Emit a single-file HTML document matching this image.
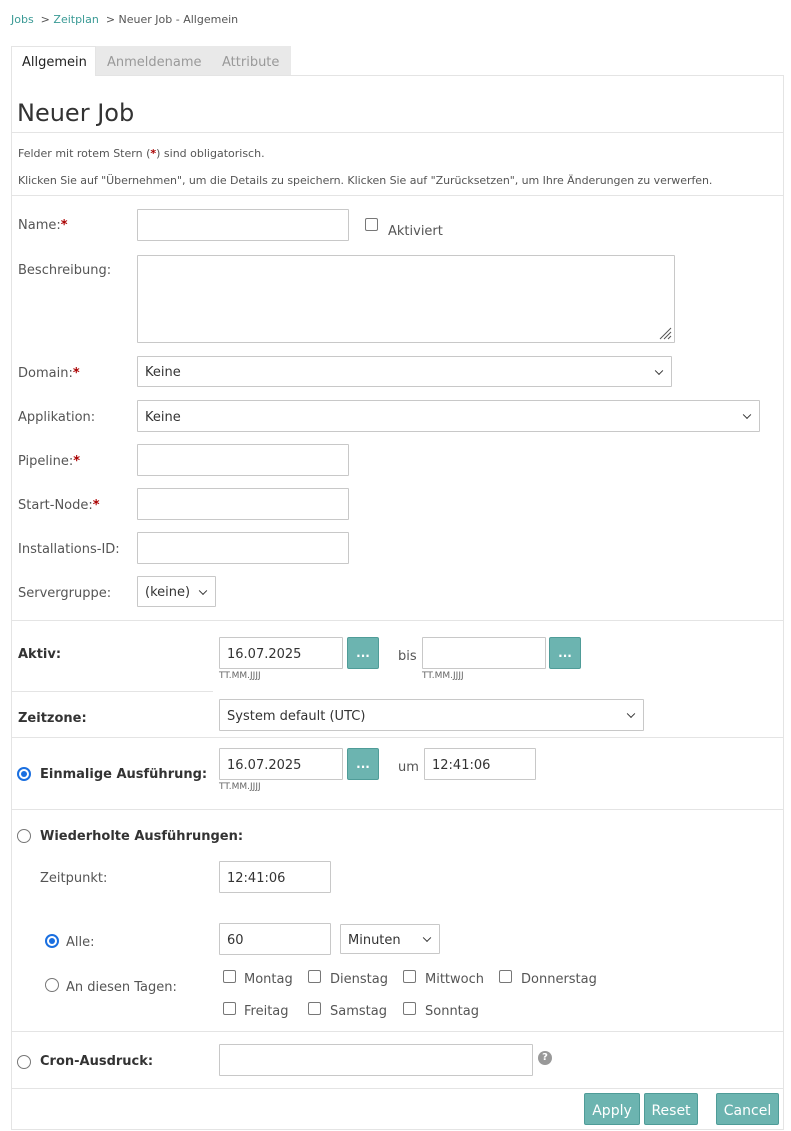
<!DOCTYPE html>
<html><head><meta charset="utf-8"><style>
*{box-sizing:border-box}
body{margin:0;width:791px;height:1131px;background:#fff;font-family:"DejaVu Sans","Liberation Sans",sans-serif;font-size:13px;color:#555;position:relative;overflow:hidden}
.a{position:absolute;white-space:nowrap;margin-top:1px}
.in{position:absolute;border:1px solid #c8c8c8;background:#fff;border-radius:1px;color:#333;padding-left:7px;padding-top:2px;display:flex;align-items:center;font-size:13px}
.sel::after{content:"";position:absolute;right:9px;top:50%;width:5px;height:5px;border-right:1.5px solid #333;border-bottom:1.5px solid #333;transform:translateY(-70%) rotate(45deg)}
.hr{position:absolute;height:1px;background:#e4e4e4}
.btn{position:absolute;background:#6cb4b0;border:1px solid #4f9c98;color:#fff;border-radius:2px;display:flex;align-items:center;justify-content:center;font-size:14px;padding-top:3px}
.dot{position:absolute;background:#6cb4b0;border:1px solid #4f9c98;color:#fff;width:32px;height:32px;border-radius:2px;text-align:center;font-size:12px;line-height:30px;font-weight:bold}
.b{font-weight:bold;color:#333}
.st{color:#a00;font-weight:bold}
.rad{position:absolute;width:14px;height:14px;border:1px solid #777;border-radius:50%;background:#fff}
.rad.on{border:2px solid #1a6fe0}
.rad.on::after{content:"";position:absolute;left:2px;top:2px;width:6px;height:6px;border-radius:50%;background:#1a6fe0}
.cb{position:absolute;width:13px;height:13px;border:1px solid #777;border-radius:2px;background:#fff}
.hint{position:absolute;font-size:9px;color:#666}
</style></head><body>
<div class="a" style="left:11px;top:12px;font-size:11px"><span style="color:#3a9a95">Jobs</span>&nbsp; &gt; <span style="color:#3a9a95">Zeitplan</span>&nbsp; &gt; Neuer Job - Allgemein</div>

<div style="position:absolute;left:11px;top:46px;width:280px;height:29px;background:#e9e9e9"></div>
<div style="position:absolute;left:11px;top:46px;width:85px;height:30px;background:#fff;border:1px solid #e4e4e4;border-bottom:none"></div>
<div class="a" style="left:22px;top:54px;color:#222">Allgemein</div>
<div class="a" style="left:107px;top:54px;color:#999">Anmeldename</div>
<div class="a" style="left:222px;top:54px;color:#999">Attribute</div>
<div style="position:absolute;left:11px;top:75px;width:773px;height:1055px;border:1px solid #e4e4e4;border-top:none"></div>
<div class="hr" style="left:96px;top:75px;width:688px"></div>

<div class="a" style="left:17px;top:98px;font-size:24px;color:#333">Neuer Job</div>
<div class="hr" style="left:12px;top:132px;width:771px"></div>
<div class="a" style="left:18px;top:146px;font-size:11px">Felder mit rotem Stern (<span class="st">*</span>) sind obligatorisch.</div>
<div class="a" style="left:18px;top:173px;font-size:11px;letter-spacing:-0.05px">Klicken Sie auf "Übernehmen", um die Details zu speichern. Klicken Sie auf "Zurücksetzen", um Ihre Änderungen zu verwerfen.</div>
<div class="hr" style="left:12px;top:195px;width:771px"></div>

<div class="a" style="left:18px;top:217px">Name:<span class="st">*</span></div>
<div class="in" style="left:137px;top:209px;width:212px;height:32px"></div>
<div class="cb" style="left:365px;top:218px"></div>
<div class="a" style="left:388px;top:223px">Aktiviert</div>

<div class="a" style="left:18px;top:262px">Beschreibung:</div>
<div class="in" style="left:137px;top:255px;width:538px;height:88px"><svg style="position:absolute;right:2px;bottom:2px" width="14" height="14"><path d="M2 13L13 2M6 13L13 6M10 13L13 10" stroke="#555" stroke-width="1"/></svg></div>

<div class="a" style="left:18px;top:365px">Domain:<span class="st">*</span></div>
<div class="in sel" style="left:137px;top:356px;width:535px;height:31px">Keine</div>
<div class="a" style="left:18px;top:409px">Applikation:</div>
<div class="in sel" style="left:137px;top:400px;width:623px;height:32px">Keine</div>
<div class="a" style="left:18px;top:453px">Pipeline:<span class="st">*</span></div>
<div class="in" style="left:137px;top:444px;width:212px;height:32px"></div>
<div class="a" style="left:18px;top:497px">Start-Node:<span class="st">*</span></div>
<div class="in" style="left:137px;top:488px;width:212px;height:32px"></div>
<div class="a" style="left:18px;top:541px">Installations-ID:</div>
<div class="in" style="left:137px;top:532px;width:212px;height:32px"></div>
<div class="a" style="left:18px;top:585px">Servergruppe:</div>
<div class="in sel" style="left:137px;top:576px;width:79px;height:31px">(keine)</div>
<div class="hr" style="left:12px;top:620px;width:771px"></div>

<div class="a b" style="left:18px;top:646px">Aktiv:</div>
<div class="in" style="left:219px;top:637px;width:124px;height:32px">16.07.2025</div>
<div class="dot" style="left:347px;top:637px">...</div>
<div class="hint" style="left:219px;top:671px">TT.MM.JJJJ</div>
<div class="a" style="left:398px;top:648px">bis</div>
<div class="in" style="left:422px;top:637px;width:124px;height:32px"></div>
<div class="dot" style="left:549px;top:637px">...</div>
<div class="hint" style="left:422px;top:671px">TT.MM.JJJJ</div>
<div class="hr" style="left:12px;top:691px;width:201px"></div>
<div class="a b" style="left:18px;top:710px">Zeitzone:</div>
<div class="in sel" style="left:219px;top:699px;width:425px;height:32px">System default (UTC)</div>
<div class="hr" style="left:12px;top:737px;width:771px"></div>

<div class="rad on" style="left:17px;top:767px"></div>
<div class="a b" style="left:40px;top:766px">Einmalige Ausführung:</div>
<div class="in" style="left:219px;top:748px;width:124px;height:32px">16.07.2025</div>
<div class="dot" style="left:347px;top:748px">...</div>
<div class="hint" style="left:219px;top:782px">TT.MM.JJJJ</div>
<div class="a" style="left:398px;top:759px">um</div>
<div class="in" style="left:424px;top:748px;width:112px;height:32px">12:41:06</div>
<div class="hr" style="left:12px;top:809px;width:771px"></div>

<div class="rad" style="left:17px;top:829px"></div>
<div class="a b" style="left:40px;top:828px">Wiederholte Ausführungen:</div>
<div class="a" style="left:40px;top:870px">Zeitpunkt:</div>
<div class="in" style="left:219px;top:861px;width:112px;height:32px">12:41:06</div>
<div class="rad on" style="left:45px;top:934px"></div>
<div class="a" style="left:66px;top:934px">Alle:</div>
<div class="in" style="left:219px;top:923px;width:112px;height:32px">60</div>
<div class="in sel" style="left:340px;top:924px;width:100px;height:30px">Minuten</div>
<div class="rad" style="left:45px;top:978px"></div>
<div class="a" style="left:66px;top:979px">An diesen Tagen:</div>
<div class="cb" style="left:223px;top:970px"></div><div class="a" style="left:244px;top:971px">Montag</div>
<div class="cb" style="left:308px;top:970px"></div><div class="a" style="left:330px;top:971px">Dienstag</div>
<div class="cb" style="left:403px;top:970px"></div><div class="a" style="left:425px;top:971px">Mittwoch</div>
<div class="cb" style="left:499px;top:970px"></div><div class="a" style="left:521px;top:971px">Donnerstag</div>
<div class="cb" style="left:223px;top:1002px"></div><div class="a" style="left:244px;top:1003px">Freitag</div>
<div class="cb" style="left:308px;top:1002px"></div><div class="a" style="left:330px;top:1003px">Samstag</div>
<div class="cb" style="left:403px;top:1002px"></div><div class="a" style="left:425px;top:1003px">Sonntag</div>
<div class="hr" style="left:12px;top:1031px;width:771px"></div>

<div class="rad" style="left:17px;top:1055px"></div>
<div class="a b" style="left:40px;top:1053px">Cron-Ausdruck:</div>
<div class="in" style="left:219px;top:1044px;width:314px;height:32px"></div>
<div style="position:absolute;left:538px;top:1051px;width:14px;height:14px;border-radius:50%;background:#999;color:#fff;font-size:10px;font-weight:bold;text-align:center;line-height:14px">?</div>
<div class="hr" style="left:12px;top:1088px;width:771px"></div>

<div class="btn" style="left:584px;top:1093px;width:56px;height:32px">Apply</div>
<div class="btn" style="left:644px;top:1093px;width:54px;height:32px">Reset</div>
<div class="btn" style="left:716px;top:1093px;width:63px;height:32px">Cancel</div>
</body></html>
